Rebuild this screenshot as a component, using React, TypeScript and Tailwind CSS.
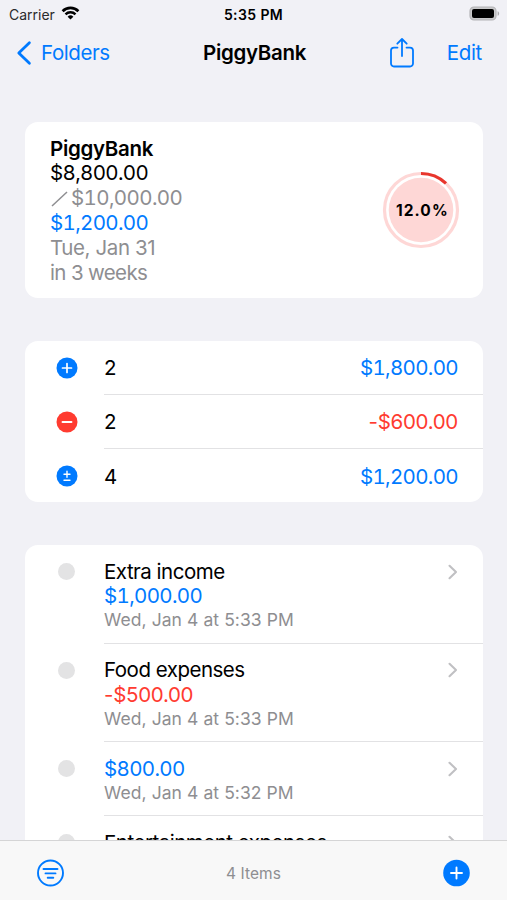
type Kind = "plus" | "minus" | "plusminus";

type Entry = {
  title?: string;
  amount?: string;
  date?: string;
};

const totals: { kind: Kind; count: number; amount: string }[] = [
  { kind: "plus", count: 2, amount: "$1,800.00" },
  { kind: "minus", count: 2, amount: "-$600.00" },
  { kind: "plusminus", count: 4, amount: "$1,200.00" },
];

const entries: Entry[] = [
  { title: "Extra income", amount: "$1,000.00", date: "Wed, Jan 4 at 5:33 PM" },
  { title: "Food expenses", amount: "-$500.00", date: "Wed, Jan 4 at 5:33 PM" },
  { amount: "$800.00", date: "Wed, Jan 4 at 5:32 PM" },
  { title: "Entertainment expenses" },
];

function StatusBar() {
  return (
    <div className="flex h-7 items-center justify-between pl-[9px] pr-[7px] text-black">
      <div className="flex flex-1 items-center gap-1.5">
        <span className="text-[14px] text-[#2a2a2c]">Carrier</span>
        <svg className="mb-0.5" width="19" height="14" viewBox="0 0 19 14" fill="none">
          <path d="M1.6 5.2a11.2 11.2 0 0 1 15.8 0" stroke="#000" strokeWidth="2.7" />
          <path d="M4.5 8.3a7 7 0 0 1 10 0" stroke="#000" strokeWidth="2.4" />
          <path d="M9.5 13.6 6.6 10.7a4.1 4.1 0 0 1 5.8 0Z" fill="#000" />
        </svg>
      </div>
      <span className="pr-0.5 text-[14px] font-semibold tracking-[0.4px]">5:35 PM</span>
      <div className="flex flex-1 justify-end pb-0.5">
        <svg width="31" height="15" viewBox="0 0 31 15" fill="none">
          <rect x="1" y="1" width="26" height="13" rx="4" fill="#c9c9cb" stroke="#b4b4b6" strokeWidth="1.2" />
          <rect x="3" y="3" width="22" height="9" rx="2" fill="#000" />
          <path d="M28.6 5.2c2 .7 2 3.9 0 4.6Z" fill="#a9a9ab" />
        </svg>
      </div>
    </div>
  );
}

function NavBar() {
  return (
    <div className="flex h-[50px] items-center pl-4 pr-[25px] text-[20.5px] text-[#007aff]">
      <div className="flex w-[187px] items-center gap-[9px]">
        <svg width="16" height="26" viewBox="0 0 16 26" fill="none">
          <path d="M13.4 2.8 2.8 13l10.6 10.2" stroke="currentColor" strokeWidth="2.8" strokeLinecap="round" strokeLinejoin="round" />
        </svg>
        <span className="tracking-[-0.4px]">Folders</span>
      </div>
      <span className="font-semibold tracking-[-0.3px] text-black">PiggyBank</span>
      <div className="flex flex-1 items-center justify-end gap-8">
        <svg width="26" height="32" viewBox="0 0 26 32" fill="none" stroke="currentColor" strokeWidth="1.8" strokeLinecap="round" strokeLinejoin="round">
          <path d="M8.500 10.600H5a3 3 0 0 0-3 3V26.500a3 3 0 0 0 3 3h16a3 3 0 0 0 3-3V13.600a3 3 0 0 0-3-3h-3.500" />
          <path d="M13 19V2.300M8.300 6.700 13 2l4.700 4.700" />
        </svg>
        <span className="tracking-[-0.3px]">Edit</span>
      </div>
    </div>
  );
}

function Amount({ value }: { value: string }) {
  return value.startsWith("-") ? (
    <span className="tracking-[-0.3px] text-[#ff3b30]">{value}</span>
  ) : (
    <span className="tabular-nums tracking-[-0.65px] text-[#007aff]">{value}</span>
  );
}

function Progress() {
  return (
    <div className="grid h-[78px] w-[78px] place-items-center">
      <svg className="col-start-1 row-start-1" width="78" height="78" viewBox="0 0 78 78" fill="none">
        <circle cx="39" cy="39" r="36.5" stroke="#fed7d6" strokeWidth="3.2" />
        <circle cx="39" cy="39" r="32.3" fill="#fed7d6" />
        <path d="M39 2.5A36.5 36.5 0 0 1 64 12.4" stroke="#e8362d" strokeWidth="3.2" />
      </svg>
      <span className="col-start-1 row-start-1 pl-0.5 pt-px text-[15.5px] font-bold tracking-[1.1px] text-black">12.0%</span>
    </div>
  );
}

function KindIcon({ kind }: { kind: Kind }) {
  return (
    <svg width="22" height="22" viewBox="0 0 22 22" fill="none" stroke="#fff" strokeLinecap="round">
      <circle cx="11" cy="11" r="10.5" fill={kind === "minus" ? "#ff3b30" : "#007aff"} stroke="none" />
      {kind === "plus" && <path d="M6.5 11h9M11 6.5v9" strokeWidth="1.7" />}
      {kind === "minus" && <path d="M6.5 11h9" strokeWidth="1.9" />}
      {kind === "plusminus" && <path d="M8 9.2h6M11 6.2v6M8 15.3h6" strokeWidth="1.4" />}
    </svg>
  );
}

function Chevron() {
  return (
    <svg width="12" height="16" viewBox="0 0 12 16" fill="none">
      <path d="m2.500 1.800 6.500 6.200-6.500 6.200" stroke="#c0c0c3" strokeWidth="2.1" strokeLinecap="round" strokeLinejoin="round" />
    </svg>
  );
}

function EntryRow({ entry, last }: { entry: Entry; last: boolean }) {
  return (
    <div className="flex pl-[33px]">
      <div className="mt-[18px] h-[17px] w-[17px] shrink-0 rounded-full bg-[#e3e3e4]" />
      <div className={`ml-[29px] flex flex-1 justify-between pt-[14.7px] pb-[12.2px] pr-6 ${last ? "" : "border-b border-[#e2e2e4]"}`}>
        <div className="flex flex-col whitespace-nowrap text-[20.5px] leading-[24.6px]">
          {entry.title && <span className="tracking-[-0.5px] text-black">{entry.title}</span>}
          {entry.amount && <Amount value={entry.amount} />}
          {entry.date && (
            <span className="text-[17.5px] leading-[21.6px] tracking-[0.08px] text-[#8e8e91]">{entry.date}</span>
          )}
        </div>
        <div className="mt-[4px]">
          <Chevron />
        </div>
      </div>
    </div>
  );
}

function Toolbar() {
  return (
    <div className="flex h-[60px] shrink-0 items-center justify-between border-t border-[#d5d5d6] bg-[#f8f8f8] pb-px pl-9 pr-9 pt-1.5">
      <svg width="29" height="29" viewBox="0 0 29 29" fill="none" stroke="#007aff" strokeLinecap="round">
        <circle cx="14.5" cy="14" r="12.5" strokeWidth="1.9" />
        <path d="M7.500 10h14M9.500 14.400h10M11.700 18.700h5.600" strokeWidth="1.9" />
      </svg>
      <span className="pt-0.5 text-[15.5px] tracking-[0.1px] text-[#8e8e91]">4 Items</span>
      <svg width="29" height="29" viewBox="0 0 29 29" fill="none">
        <circle cx="14.5" cy="14" r="13.3" fill="#007aff" />
        <path d="M9 14h11M14.500 8.500v11" stroke="#fff" strokeWidth="1.9" strokeLinecap="round" />
      </svg>
    </div>
  );
}

export default function App() {
  return (
    <div className="flex h-[900px] w-[507px] flex-col overflow-hidden bg-[#f1f1f6] font-['Inter',sans-serif]">
      <StatusBar />
      <NavBar />

      <main className="flex min-h-0 flex-1 flex-col gap-[43px] overflow-hidden pl-[25px] pr-6 pt-11">
        <section className="flex h-44 shrink-0 items-center justify-between rounded-[13px] bg-white pl-[25px] pr-[22.7px]">
          <div className="flex flex-col whitespace-nowrap pt-0.5 text-[20.5px] leading-[24.8px] tracking-[-0.4px] text-[#8e8e91]">
            <span className="font-semibold tracking-[-0.3px] text-black">PiggyBank</span>
            <span className="tabular-nums tracking-[-0.65px] text-black">$8,800.00</span>
            <span className="flex items-center tabular-nums tracking-[-0.6px]">
              <svg className="mr-0.5" width="19" height="18" viewBox="0 0 19 18" fill="none">
                <path d="M2 16 17 2" stroke="currentColor" strokeWidth="1.5" />
              </svg>
              $10,000.00
            </span>
            <Amount value="$1,200.00" />
            <span>Tue, Jan 31</span>
            <span className="tracking-[-0.65px]">in 3 weeks</span>
          </div>
          <Progress />
        </section>

        <section className="h-[161px] shrink-0 rounded-[13px] bg-white">
          {totals.map((t, i) => (
            <div key={t.kind} className="flex h-[54px] items-center pl-[31px]">
              <KindIcon kind={t.kind} />
              <div className={`ml-[26px] flex h-full flex-1 items-center justify-between pr-[25px] pt-0.5 text-[20.5px] ${i < totals.length - 1 ? "border-b border-[#e2e2e4]" : ""}`}>
                <span className="text-black">{t.count}</span>
                <Amount value={t.amount} />
              </div>
            </div>
          ))}
        </section>

        <section className="h-96 shrink-0 rounded-[13px] bg-white">
          {entries.map((entry, i) => (
            <EntryRow key={i} entry={entry} last={i === entries.length - 1} />
          ))}
        </section>
      </main>

      <Toolbar />
    </div>
  );
}
